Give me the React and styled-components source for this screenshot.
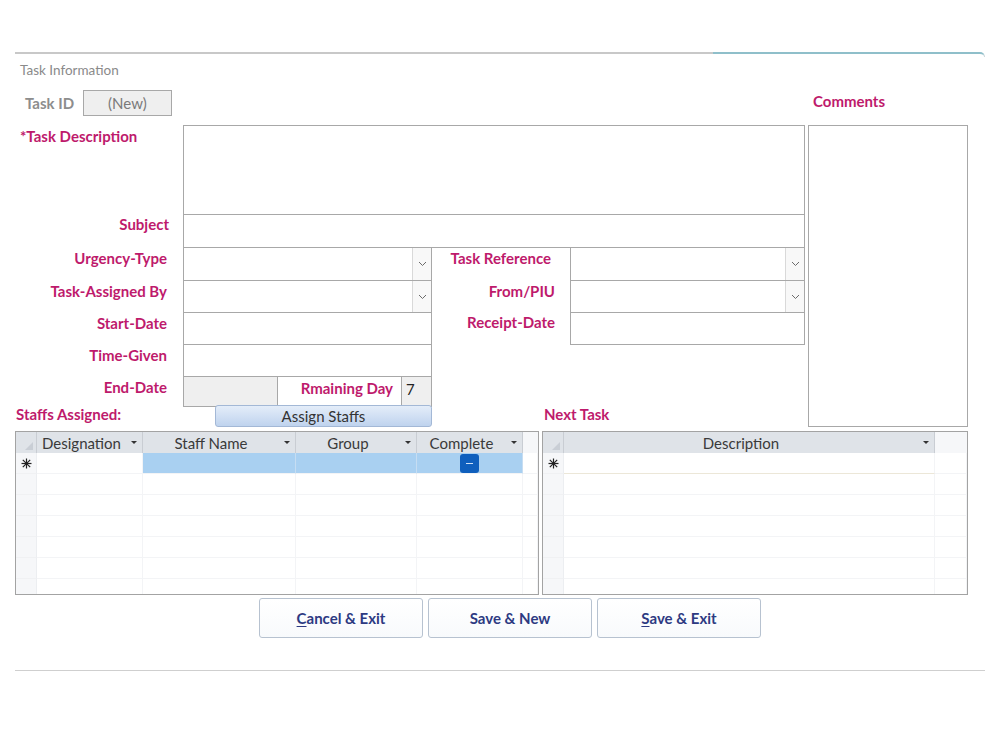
import React from 'react'
import styled, { createGlobalStyle } from 'styled-components'

const GlobalStyle = createGlobalStyle`
  html, body {
    margin: 0;
    padding: 0;
    background: #fff;
  }
  body {
    font-family: Lato, 'Liberation Sans', sans-serif;
    color: #333;
  }
  * {
    box-sizing: border-box;
  }
`

const palette = {
  label: '#be1a6c',
  muted: '#8d8d8d',
  border: '#a8a8a8',
  navy: '#2d3a82',
  headerBg: '#dfe3e8',
  rowBlue: '#a9d0f1',
  gridLine: '#f3f4f6',
}

const Page = styled.div`
  width: 1000px;
  height: 750px;
  padding-top: 52px;
`

const Form = styled.div`
  width: 970px;
  margin-left: 15px;
`

const TopRule = styled.div`
  display: flex;
`

const RuleSegment = styled.div`
  width: ${(p) => p.$width}px;
  height: 5px;
  border-top: 2px solid ${(p) => p.$color};
  ${(p) => p.$hook && `
    border-right: 1px solid #c9d6da;
    border-top-right-radius: 5px;
  `}
`

const SectionTitle = styled.div`
  margin-top: 5px;
  padding-left: 5px;
  font-size: 13.5px;
  line-height: 16px;
  color: #8a8a8a;
`

const FieldGrid = styled.div`
  margin-top: 12px;
  display: grid;
  grid-template-columns: 168px 249px 138px 235px 3px 160px 17px;
  grid-template-rows: 35px 89px 33px 33px 32px 32px 32px 30px 21px;
`

const IdRow = styled.div`
  grid-column: 1 / 3;
  grid-row: 1;
  display: flex;
  align-items: flex-start;
  padding-left: 10px;
`

const IdLabel = styled.span`
  font-size: 15px;
  font-weight: 700;
  line-height: 26px;
  color: ${palette.muted};
`

const IdBox = styled.div`
  width: 89px;
  height: 26px;
  margin-left: 9px;
  border: 1px solid ${palette.border};
  background: #efefef;
  color: #7a7a7a;
  font-size: 15px;
  line-height: 24px;
  padding-left: 24px;
`

const Label = styled.div`
  grid-column: ${(p) => p.$col};
  grid-row: ${(p) => p.$row};
  font-size: 15px;
  font-weight: 700;
  line-height: 18px;
  color: ${palette.label};
  padding-top: ${(p) => (p.$top != null ? p.$top : 2)}px;
  text-align: ${(p) => (p.$left ? 'left' : 'right')};
  padding-left: ${(p) => (p.$left ? p.$indent || 0 : 0)}px;
  padding-right: ${(p) => (p.$left ? 0 : p.$pad || 16)}px;
  white-space: nowrap;
`

const Field = styled.div`
  grid-column: ${(p) => p.$col};
  grid-row: ${(p) => p.$row};
  margin-bottom: -1px;
  border: 1px solid ${palette.border};
  background: #fff;
  display: flex;
`

const ComboButton = styled.div`
  margin-left: auto;
  width: 19px;
  border-left: 1px solid #d9d9d9;
  background: #f8f8f8;
  display: flex;
  align-items: center;
  justify-content: center;
`

const EndDateBox = styled.div`
  width: 94px;
  background: #efefef;
  border-right: 1px solid ${palette.border};
`

const InlineLabel = styled.div`
  flex: 1;
  text-align: right;
  padding-right: 8px;
  padding-top: 2px;
  font-size: 15px;
  font-weight: 700;
  line-height: 18px;
  color: ${palette.label};
`

const DaysBox = styled.div`
  width: 30px;
  background: #efefef;
  border-left: 1px solid ${palette.border};
  font-size: 15px;
  line-height: 22px;
  padding: 1px 0 0 4px;
  color: #222;
`

const CommentsBox = styled.div`
  grid-column: 6;
  grid-row: 2 / 10;
  border: 1px solid ${palette.border};
`

const StaffBar = styled.div`
  grid-column: 1 / 5;
  grid-row: 9;
  display: grid;
  grid-template-columns: 200px 217px 112px 1fr;
  align-items: start;
`

const BarLabel = styled.div`
  margin-top: -1px;
  padding-left: ${(p) => p.$indent || 0}px;
  font-size: 15px;
  font-weight: 700;
  line-height: 18px;
  color: ${palette.label};
`

const AssignButton = styled.div`
  height: 22px;
  margin-top: -1px;
  border: 1px solid #a3b8d6;
  border-radius: 3px;
  background: linear-gradient(#e4edf9, #bfd3ee);
  text-align: center;
  font-size: 15px;
  line-height: 20px;
  color: #333;
`

const Tables = styled.div`
  margin-top: 4px;
  display: flex;
  gap: 3px;
`

const Sheet = styled.div`
  width: ${(p) => p.$width}px;
  height: 164px;
  border: 1px solid #a3a3a3;
  overflow: hidden;
  display: grid;
  grid-template-columns: ${(p) => p.$cols};
  grid-auto-rows: 21px;
  align-content: start;
`

const HeadCell = styled.div`
  background: ${(p) => (p.$blank ? '#f6f7f9' : palette.headerBg)};
  border-right: 1px solid ${(p) => (p.$blank ? 'transparent' : '#c9cdd3')};
  display: flex;
  align-items: center;
  font-size: 15px;
  color: #3a3a3a;
`

const HeadText = styled.span`
  flex: 1;
  text-align: center;
`

const SortArrow = styled.span`
  width: 16px;
  display: flex;
  justify-content: center;
  &::before {
    content: '';
    border-left: 3px solid transparent;
    border-right: 3px solid transparent;
    border-top: 3px solid #333;
  }
`

const SelectorHead = styled.div`
  background: ${palette.headerBg};
  border-right: 1px solid #c9cdd3;
  display: flex;
  align-items: flex-end;
  justify-content: flex-end;
  padding: 0 3px 3px 0;
`

const Selector = styled.div`
  background: #f6f7f9;
  border-bottom: 1px solid #f0f1f3;
  border-right: 1px solid #eceef1;
  display: flex;
  align-items: center;
  justify-content: center;
`

const Cell = styled.div`
  background: ${(p) => (p.$active ? palette.rowBlue : '#fff')};
  border-right: 1px solid ${(p) => (p.$active ? '#c6ddf2' : palette.gridLine)};
  border-bottom: 1px solid ${(p) => (p.$edge || palette.gridLine)};
  display: flex;
  align-items: center;
  justify-content: center;
`

const CheckBox = styled.div`
  width: 19px;
  height: 19px;
  border-radius: 3px;
  background: #0f5fbd;
  display: flex;
  align-items: center;
  justify-content: center;
  &::before {
    content: '';
    width: 7px;
    height: 1px;
    background: #cfe0f5;
  }
`

const ButtonRow = styled.div`
  margin-top: 3px;
  padding-left: 244px;
  display: flex;
  gap: 5px;
`

const ActionButton = styled.div`
  width: 164px;
  height: 40px;
  border: 1px solid #b7c2d0;
  border-radius: 3px;
  background: linear-gradient(#ffffff, #f8fafc);
  display: flex;
  align-items: center;
  justify-content: center;
  font-size: 15px;
  font-weight: 700;
  color: ${palette.navy};
  u {
    text-decoration-thickness: 1px;
    text-underline-offset: 2px;
  }
`

const BottomRule = styled.div`
  margin-top: 32px;
  border-top: 1px solid #cfcfcf;
`

const Chevron = () => (
  <svg width="9" height="6" viewBox="0 0 9 6">
    <polyline points="1,1 4.5,4.5 8,1" fill="none" stroke="#6b6b6b" strokeWidth="1" />
  </svg>
)

const NewRowMark = () => (
  <svg width="11" height="11" viewBox="0 0 11 11">
    <g stroke="#222" strokeWidth="1.2">
      <line x1="5.5" y1="0.5" x2="5.5" y2="10.5" />
      <line x1="0.5" y1="5.5" x2="10.5" y2="5.5" />
      <line x1="1.8" y1="1.8" x2="9.2" y2="9.2" />
      <line x1="9.2" y1="1.8" x2="1.8" y2="9.2" />
    </g>
  </svg>
)

const CornerMark = () => (
  <svg width="8" height="8" viewBox="0 0 8 8">
    <polygon points="8,0 8,8 0,8" fill="#c9ced5" />
  </svg>
)

const staffColumns = ['Designation', 'Staff Name', 'Group', 'Complete']
const emptyRows = [0, 1, 2, 3, 4, 5]

const ComboField = ({ col, row }) => (
  <Field $col={col} $row={row}>
    <ComboButton>
      <Chevron />
    </ComboButton>
  </Field>
)

const StaffSheet = () => (
  <Sheet $width={524} $cols="21px 106px 153px 121px 106px 1fr">
    <SelectorHead>
      <CornerMark />
    </SelectorHead>
    {staffColumns.map((name) => (
      <HeadCell key={name}>
        <HeadText>{name}</HeadText>
        <SortArrow />
      </HeadCell>
    ))}
    <HeadCell $blank />

    <Selector>
      <NewRowMark />
    </Selector>
    <Cell />
    <Cell $active />
    <Cell $active />
    <Cell $active>
      <CheckBox />
    </Cell>
    <Cell />

    {emptyRows.map((r) => (
      <React.Fragment key={r}>
        <Selector />
        <Cell />
        <Cell />
        <Cell />
        <Cell />
        <Cell />
      </React.Fragment>
    ))}
  </Sheet>
)

const NextTaskSheet = () => (
  <Sheet $width={426} $cols="21px 371px 1fr">
    <SelectorHead>
      <CornerMark />
    </SelectorHead>
    <HeadCell>
      <HeadText>Description</HeadText>
      <SortArrow />
    </HeadCell>
    <HeadCell $blank />

    <Selector>
      <NewRowMark />
    </Selector>
    <Cell $edge="#ece7d8" />
    <Cell />

    {emptyRows.map((r) => (
      <React.Fragment key={r}>
        <Selector />
        <Cell />
        <Cell />
      </React.Fragment>
    ))}
  </Sheet>
)

const App = () => (
  <>
    <GlobalStyle />
    <Page>
      <Form>
        <TopRule>
          <RuleSegment $width={698} $color="#c8c8c8" />
          <RuleSegment $width={272} $color="#8fbfca" $hook />
        </TopRule>
        <SectionTitle>Task Information</SectionTitle>

        <FieldGrid>
          <IdRow>
            <IdLabel>Task ID</IdLabel>
            <IdBox>(New)</IdBox>
          </IdRow>
          <Label $col={6} $row={1} $left $indent={5} $top={2}>
            Comments
          </Label>

          <Label $col={1} $row={2} $left $indent={5}>
            *Task Description
          </Label>
          <Field $col="2 / 5" $row={2} />
          <CommentsBox />

          <Label $col={1} $row={3} $top={1} $pad={14}>
            Subject
          </Label>
          <Field $col="2 / 5" $row={3} />

          <Label $col={1} $row={4}>Urgency-Type</Label>
          <ComboField col={2} row={4} />
          <Label $col={3} $row={4} $pad={19}>
            Task Reference
          </Label>
          <ComboField col={4} row={4} />

          <Label $col={1} $row={5}>Task-Assigned By</Label>
          <ComboField col={2} row={5} />
          <Label $col={3} $row={5} $pad={15}>
            From/PIU
          </Label>
          <ComboField col={4} row={5} />

          <Label $col={1} $row={6}>Start-Date</Label>
          <Field $col={2} $row={6} />
          <Label $col={3} $row={6} $top={1} $pad={15}>
            Receipt-Date
          </Label>
          <Field $col={4} $row={6} />

          <Label $col={1} $row={7}>Time-Given</Label>
          <Field $col={2} $row={7} />

          <Label $col={1} $row={8}>End-Date</Label>
          <Field $col={2} $row={8}>
            <EndDateBox />
            <InlineLabel>Rmaining Day</InlineLabel>
            <DaysBox>7</DaysBox>
          </Field>

          <StaffBar>
            <BarLabel $indent={1}>Staffs Assigned:</BarLabel>
            <AssignButton>Assign Staffs</AssignButton>
            <span />
            <BarLabel>Next Task</BarLabel>
          </StaffBar>
        </FieldGrid>

        <Tables>
          <StaffSheet />
          <NextTaskSheet />
        </Tables>

        <ButtonRow>
          <ActionButton>
            <span>
              <u>C</u>ancel &amp; Exit
            </span>
          </ActionButton>
          <ActionButton>Save &amp; New</ActionButton>
          <ActionButton>
            <span>
              <u>S</u>ave &amp; Exit
            </span>
          </ActionButton>
        </ButtonRow>

        <BottomRule />
      </Form>
    </Page>
  </>
)

export default App
